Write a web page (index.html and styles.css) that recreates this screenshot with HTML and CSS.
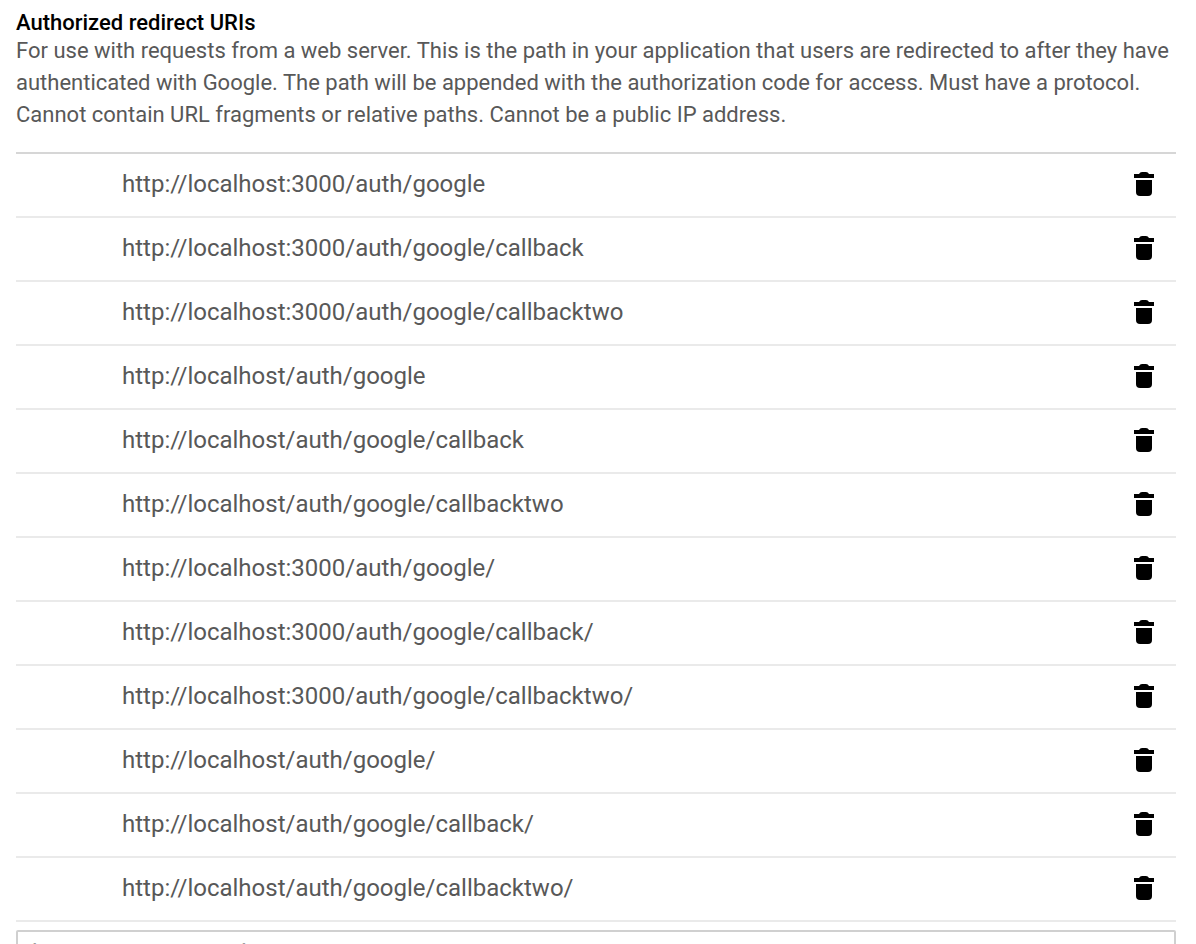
FILE: index.html
```html
<!DOCTYPE html>
<html lang="en">

<head>
    <meta charset="UTF-8">
    <meta name="viewport" content="width=device-width, initial-scale=1.0">
    <title>Authorized redirect URIs</title>
    <link rel="stylesheet" href="styles.css">
</head>

<body>
<!-- trash icon, shared by every row -->
<svg class="sprite" width="0" height="0" aria-hidden="true">
    <symbol id="trash" viewBox="0 0 20 24">
        <path d="M0 2h5q1-2 3-2h4q2 0 3 2h5v4H0z"/>
        <path d="M2 8h16v12q0 4-4 4H6q-4 0-4-4z"/>
    </symbol>
</svg>

<form class="redirect">
    <h3 class="title"><label for="new_uri">Authorized redirect URIs</label></h3>
    <p class="info">For use with requests from a web server. This is the path in your application that users are redirected to after they have authenticated with Google. The path will be appended with the authorization code for access. Must have a protocol. Cannot contain URL fragments or relative paths. Cannot be a public IP address.</p>

    <ul class="uri-list">
        <li class="uri-item"><span class="uri">http://localhost:3000/auth/google</span><button type="button" class="del-btn" aria-label="Delete"><svg class="icon"><use href="#trash"/></svg></button></li>
        <li class="uri-item"><span class="uri">http://localhost:3000/auth/google/callback</span><button type="button" class="del-btn" aria-label="Delete"><svg class="icon"><use href="#trash"/></svg></button></li>
        <li class="uri-item"><span class="uri">http://localhost:3000/auth/google/callbacktwo</span><button type="button" class="del-btn" aria-label="Delete"><svg class="icon"><use href="#trash"/></svg></button></li>
        <li class="uri-item"><span class="uri">http://localhost/auth/google</span><button type="button" class="del-btn" aria-label="Delete"><svg class="icon"><use href="#trash"/></svg></button></li>
        <li class="uri-item"><span class="uri">http://localhost/auth/google/callback</span><button type="button" class="del-btn" aria-label="Delete"><svg class="icon"><use href="#trash"/></svg></button></li>
        <li class="uri-item"><span class="uri">http://localhost/auth/google/callbacktwo</span><button type="button" class="del-btn" aria-label="Delete"><svg class="icon"><use href="#trash"/></svg></button></li>
        <li class="uri-item"><span class="uri">http://localhost:3000/auth/google/</span><button type="button" class="del-btn" aria-label="Delete"><svg class="icon"><use href="#trash"/></svg></button></li>
        <li class="uri-item"><span class="uri">http://localhost:3000/auth/google/callback/</span><button type="button" class="del-btn" aria-label="Delete"><svg class="icon"><use href="#trash"/></svg></button></li>
        <li class="uri-item"><span class="uri">http://localhost:3000/auth/google/callbacktwo/</span><button type="button" class="del-btn" aria-label="Delete"><svg class="icon"><use href="#trash"/></svg></button></li>
        <li class="uri-item"><span class="uri">http://localhost/auth/google/</span><button type="button" class="del-btn" aria-label="Delete"><svg class="icon"><use href="#trash"/></svg></button></li>
        <li class="uri-item"><span class="uri">http://localhost/auth/google/callback/</span><button type="button" class="del-btn" aria-label="Delete"><svg class="icon"><use href="#trash"/></svg></button></li>
        <li class="uri-item"><span class="uri">http://localhost/auth/google/callbacktwo/</span><button type="button" class="del-btn" aria-label="Delete"><svg class="icon"><use href="#trash"/></svg></button></li>
    </ul>

    <input type="url" class="uri-inp" id="new_uri" name="new_uri" placeholder="https://www.example.com">
</form>
</body>

</html>
```

FILE: styles.css
```css
body {
    margin: 0;
    background-color: #fff;
    color: #585858;
    font-family: Roboto, "Liberation Sans", sans-serif;
}
.sprite {
    display: block;
}
.redirect {
    padding: 10px 20px 0 16px;
}
.title {
    margin: 0;
    font-size: 22px;
    line-height: 25px;
    font-weight: 500;
    color: #000;
}
.info {
    margin: 0 0 21px;
    font-size: 22px;
    line-height: 32px;
}
.uri-list {
    margin: 0 0 8px;
    padding: 0;
    list-style: none;
    border-top: 2px solid #d6d6d6;
}
.uri-item {
    display: flex;
    align-items: center;
    justify-content: space-between;
    box-sizing: border-box;
    height: 64px;
    padding: 0 22px 2px 106px;
    border-bottom: 2px solid #eaeaea;
    font-size: 24px;
}
.del-btn {
    display: flex;
    padding: 0;
    border: none;
    background: none;
    cursor: pointer;
}
.icon {
    width: 20px;
    height: 24px;
    fill: #000;
}
.uri-inp {
    display: block;
    box-sizing: border-box;
    width: 100%;
    height: 46px;
    padding: 0 14px;
    border: 2px solid #d0d0d0;
    border-radius: 2px;
    font: inherit;
    font-size: 24px;
}
.uri-inp::placeholder {
    color: #9e9e9e;
}
```
